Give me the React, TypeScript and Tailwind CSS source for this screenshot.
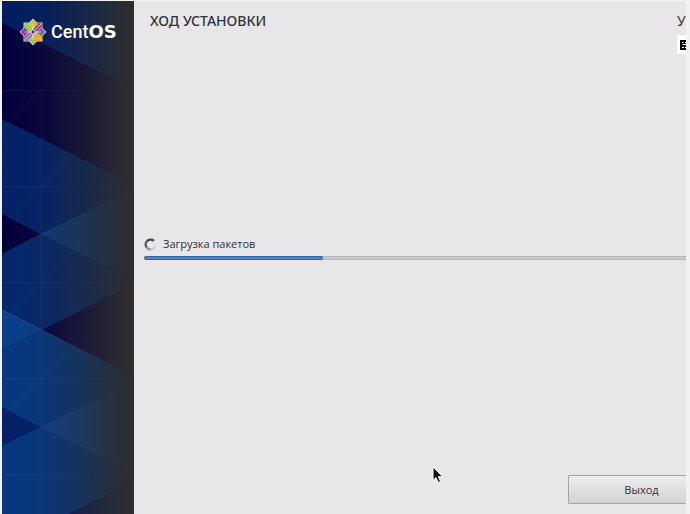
function SidebarArt() {
  return (
    <svg
      className="absolute inset-0 h-full w-full"
      viewBox="2 1 132 513"
      preserveAspectRatio="xMinYMin slice"
      aria-hidden="true"
    >
      <defs>
        <linearGradient id="fade" x1="0" x2="1" y1="0" y2="0">
          <stop offset="0" stopColor="#2d2d2f" stopOpacity="0" />
          <stop offset="0.3" stopColor="#2d2d2f" stopOpacity="0.14" />
          <stop offset="0.6" stopColor="#2d2d2f" stopOpacity="0.48" />
          <stop offset="0.9" stopColor="#2d2d2f" stopOpacity="0.92" />
          <stop offset="1" stopColor="#2e2e2e" />
        </linearGradient>
      </defs>
      <rect x="2" y="1" width="132" height="513" fill="#02003c" />
      <path d="M2 1H134V89L2 23Z" fill="#001d62" />
      <path d="M2 119L134 185V284L42 330L134 376V514H2Z" fill="#00226b" />
      <path d="M2 214L40 234L2 254Z" fill="#02003c" />
      <path d="M40 234L134 189V280Z" fill="#0b397d" />
      <path d="M2 254L40 234L134 280V284L42 330L2 310Z" fill="#03276f" />
      <path d="M2 310L134 377V514H2Z" fill="#033882" />
      <path d="M2 310L42 330L2 349Z" fill="#073f8d" />
      <path d="M42 330L134 284V377Z" fill="#06033f" />
      <path d="M2 407L40 427L2 446Z" fill="#00206a" />
      <path d="M40 427L134 382V472Z" fill="#0d438c" />
      <path d="M68 514L134 481V514Z" fill="#061b60" />
      <g stroke="#4a86c8" strokeWidth="1" strokeOpacity="0.12" fill="none">
        <path d="M41.500 90V514M2 90.500H110M2 186.500H110M2 282.500H110M2 378.500H110M2 474.500H90" />
        <path d="M2 129L41 90M2 225L80 147M2 321L80 243M2 417L90 330" />
      </g>
      <path d="M2 310L125 372" stroke="#3c7cc4" strokeOpacity="0.4" fill="none" />
      <rect x="2" y="1" width="132" height="513" fill="url(#fade)" />
    </svg>
  );
}

function CentOSMark() {
  return (
    <svg className="size-[28px] shrink-0" viewBox="-14 -14 28 28" aria-hidden="true">
      <path d="M-9.500 -9.500H9.500V9.500H-9.500Z" fill="#d9c9dd" />
      <path d="M0 -13.500L13.500 0L0 13.500L-13.500 0Z" fill="#e3d3e4" />
      <path d="M-8.800 -8.800H-0.500V-0.500H-8.800Z" fill="#8fc63d" />
      <path d="M0.500 -8.800H8.800V-0.500H0.500Z" fill="#9c3f8c" />
      <path d="M-8.800 0.500H-0.500V8.800H-8.800Z" fill="#8b6bb5" />
      <path d="M0.500 0.500H8.800V8.800H0.500Z" fill="#e9a332" />
      <path d="M0 -12.500L4.500 -8L0 -3.500L-4.500 -8Z" fill="#b3d334" />
      <path d="M0 -12.500L4.500 -8L0 -3.500Z" fill="#e3b23a" />
      <path d="M12.500 0L8 4.500L3.500 0L8 -4.500Z" fill="#7565ae" />
      <path d="M0 12.500L4.500 8L0 3.500L-4.500 8Z" fill="#9bcb3c" />
      <path d="M0 12.500L4.500 8L0 3.500Z" fill="#e9a33a" />
      <path d="M-12.500 0L-8 -4.500L-3.500 0L-8 4.500Z" fill="#9a3f8f" />
      <path d="M0 -8V8M-8 0H8M-8.500 -8.500L8.500 8.500M8.500 -8.500L-8.500 8.500" stroke="#f0e6ee" strokeWidth="0.7" />
      <path d="M-4.500 -8L0 -3.500L4.500 -8M-4.500 8L0 3.500L4.500 8M-8 -4.500L-3.500 0L-8 4.500M8 -4.500L3.500 0L8 4.500" stroke="#f0e6ee" strokeWidth="0.6" fill="none" />
      <circle r="1.400" fill="#3b2b73" />
    </svg>
  );
}

function Spinner() {
  return (
    <svg className="size-[13px]" viewBox="0 0 13 13" fill="none" strokeWidth="2.400" aria-hidden="true">
      <path d="M6 11.500A4.800 4.800 0 0 0 11 8" stroke="#cfced1" />
      <path d="M2.300 8.800A4.800 4.800 0 0 0 6.500 11.300" stroke="#99999b" />
      <path d="M3.200 3A4.800 4.800 0 0 0 2.600 9.200" stroke="#606062" />
      <path d="M9.800 2.800A4.800 4.800 0 0 0 3 3.300" stroke="#434345" />
    </svg>
  );
}

function Pointer() {
  return (
    <svg className="absolute top-[466px] left-[432px] h-[18px] w-[12px]" viewBox="0 0 12 18" aria-hidden="true">
      <path d="M1 1V14.500L4 11.600L6.300 16.500L8.600 15.400L6.400 10.700H10.800Z" fill="#111" stroke="#fff" strokeWidth="1" />
    </svg>
  );
}

export default function App() {
  return (
    <div className="relative flex min-h-screen bg-[#f2f1f3] pt-px pr-1 pl-0.5 font-['Open_Sans',sans-serif] text-[#2e3436]">
      <aside className="relative w-[132px] shrink-0 overflow-hidden bg-[#2e2e2e]">
        <SidebarArt />
        <div className="relative flex items-center gap-1 pt-[17px] pl-[17px] text-white">
          <CentOSMark />
          <span className="font-['Roboto',sans-serif] text-[18px] leading-6 font-medium">
            Cent<span className="font-['DejaVu_Sans',sans-serif] font-bold">OS</span>
          </span>
        </div>
      </aside>

      <main className="flex min-w-0 flex-1 flex-col overflow-hidden bg-[#e8e6e9]">
        <header className="flex h-[233px] justify-between pt-2.5 pl-4 font-['Noto_Sans',sans-serif] text-[14px] leading-5">
          <h1 className="font-medium">ХОД УСТАНОВКИ</h1>
          <div className="flex w-[9px] flex-col gap-1">
            <span>У</span>
            <span className="flex h-[19px] items-center justify-end bg-white">
              <svg className="h-[10px] w-[6px]" viewBox="0 0 6 10" aria-hidden="true">
                <path d="M0 0H6V10H0Z" fill="#000" />
                <path d="M2 2.500H3.500M5 2.500H6M2.500 4.500H6M2 7.500H4M5 7.500H6" stroke="#fff" strokeWidth="1" />
              </svg>
            </span>
          </div>
        </header>

        <section className="flex flex-col gap-0.5 pl-2.5">
          <div className="flex h-5 items-center gap-1.5">
            <Spinner />
            <p id="status" className="text-[11px] leading-5">Загрузка пакетов</p>
          </div>
          <div
            role="progressbar"
            aria-labelledby="status"
            aria-valuemin={0}
            aria-valuemax={100}
            aria-valuenow={33}
            className="h-1 rounded-l-sm border-y border-[#b6b5b7] bg-[#cccacd]"
          >
            <div className="-my-px h-1 w-[33%] rounded-xs border border-[#2d659f] bg-[#4a86c6]" />
          </div>
        </section>

        <footer className="mt-auto flex justify-end pb-2.5">
          <button
            type="button"
            className="h-[29px] w-[118px] rounded-l-xs border border-r-0 border-[#a5a4a5] bg-linear-to-b from-[#eeedee] to-[#d4d3d4] pl-7 text-[11px] leading-5"
          >
            Выход
          </button>
        </footer>
      </main>

      <Pointer />
    </div>
  );
}
